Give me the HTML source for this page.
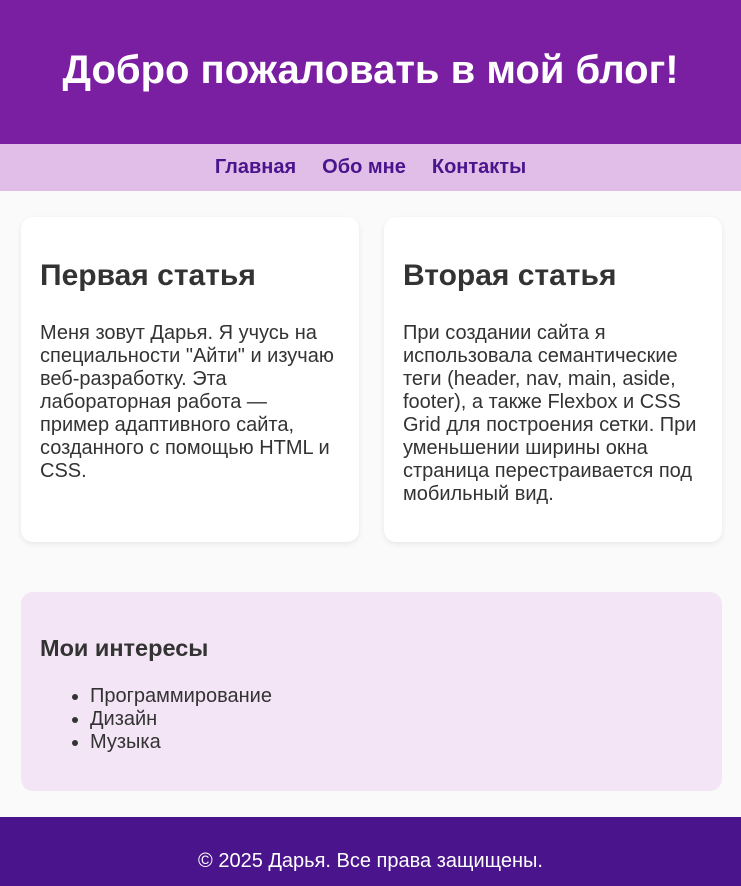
<!DOCTYPE html>
<html><head><meta charset="utf-8"><style>
*{box-sizing:border-box;margin:0;padding:0}
body{width:741px;height:886px;background:#fafafa;font-family:"Liberation Sans",Arial,sans-serif;color:#333;overflow:hidden}
header{background:#7b1fa2;height:144px;display:flex;align-items:center;justify-content:center}
header h1{color:#fff;font-size:40px;font-weight:bold;margin-top:-4px}
nav{background:#e1bee7;height:47px;display:flex;justify-content:center;align-items:center;gap:26px}
nav a{color:#4a148c;font-weight:bold;font-size:20px;text-decoration:none;margin-top:-1px}
main{display:flex;gap:25px;padding:26px 19px 0 21px}
article{background:#fff;border-radius:12px;box-shadow:0 2px 6px rgba(0,0,0,0.08);width:338px;height:325px;padding:42px 19px 0 19px}
article h2{font-size:30px;font-weight:bold;margin-bottom:29px}
article p{font-size:20px;line-height:23px}
aside{margin:50px 19px 0 21px;background:#f3e5f5;border-radius:12px;height:199px;padding:43px 19px 0 19px}
aside h3{font-size:23.5px;font-weight:bold;margin-bottom:23px}
aside ul{padding-left:50px;font-size:20px;line-height:23px}
footer{position:absolute;top:817px;left:0;width:741px;height:69px;background:#4a148c;color:#fff;font-size:20px;display:flex;justify-content:center;align-items:center;padding-top:20px}
</style></head><body>
<header><h1>Добро пожаловать в мой блог!</h1></header>
<nav><a>Главная</a><a>Обо мне</a><a>Контакты</a></nav>
<main>
<article><h2>Первая статья</h2><p>Меня зовут Дарья. Я учусь на специальности "Айти" и изучаю веб-разработку. Эта лабораторная работа — пример адаптивного сайта, созданного с помощью HTML и CSS.</p></article>
<article><h2>Вторая статья</h2><p>При создании сайта я использовала семантические теги (header, nav, main, aside, footer), а также Flexbox и CSS Grid для построения сетки. При уменьшении ширины окна страница перестраивается под мобильный вид.</p></article>
</main>
<aside><h3>Мои интересы</h3><ul><li>Программирование</li><li>Дизайн</li><li>Музыка</li></ul></aside>
<footer>© 2025 Дарья. Все права защищены.</footer>
</body></html>
